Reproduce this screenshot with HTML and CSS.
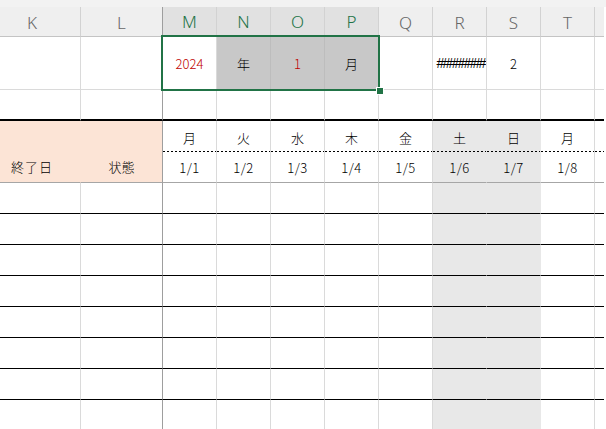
FILE: index.html
```html
<!DOCTYPE html>
<html lang="ja">
<head>
<meta charset="utf-8">
<link rel="stylesheet" href="styles.css">
</head>
<body>
<div class="sheet">
  <div class="strip"></div>
  <div class="grid">
    <!-- column headers -->
    <div class="c h k">K</div><div class="c h l">L</div>
    <div class="c h sel">M</div><div class="c h sel">N</div><div class="c h sel">O</div><div class="c h sel">P</div>
    <div class="c h">Q</div><div class="c h">R</div><div class="c h">S</div><div class="c h">T</div><div class="c h u"></div>
    <!-- row 1 -->
    <div class="c r1 k"></div><div class="c r1 l"></div>
    <div class="c r1 red">2024</div><div class="c r1 g">年</div><div class="c r1 g red">1</div><div class="c r1 g">月</div>
    <div class="c r1"></div><div class="c r1 hash">########</div><div class="c r1">2</div><div class="c r1"></div><div class="c r1 u"></div>
    <!-- row 2 -->
    <div class="c r2 k"></div><div class="c r2 l"></div>
    <div class="c r2"></div><div class="c r2"></div><div class="c r2"></div><div class="c r2"></div>
    <div class="c r2"></div><div class="c r2"></div><div class="c r2"></div><div class="c r2"></div><div class="c r2 u"></div>
    <!-- header rows -->
    <div class="c pk k k-title">終了日</div><div class="c pk l">状態</div>
    <div class="c dw">月</div><div class="c dw">火</div><div class="c dw">水</div><div class="c dw">木</div>
    <div class="c dw">金</div><div class="c dw we wr">土</div><div class="c dw we">日</div><div class="c dw">月</div><div class="c dw u"></div>
    <div class="c dt">1/1</div><div class="c dt">1/2</div><div class="c dt">1/3</div><div class="c dt">1/4</div>
    <div class="c dt">1/5</div><div class="c dt we wr">1/6</div><div class="c dt we">1/7</div><div class="c dt">1/8</div><div class="c dt u"></div>
    <!-- data rows -->
    <div class="c d k"></div><div class="c d l"></div><div class="c d"></div><div class="c d"></div><div class="c d"></div><div class="c d"></div><div class="c d"></div><div class="c d we wr"></div><div class="c d we"></div><div class="c d"></div><div class="c d u"></div>
    <div class="c d k"></div><div class="c d l"></div><div class="c d"></div><div class="c d"></div><div class="c d"></div><div class="c d"></div><div class="c d"></div><div class="c d we wr"></div><div class="c d we"></div><div class="c d"></div><div class="c d u"></div>
    <div class="c d k"></div><div class="c d l"></div><div class="c d"></div><div class="c d"></div><div class="c d"></div><div class="c d"></div><div class="c d"></div><div class="c d we wr"></div><div class="c d we"></div><div class="c d"></div><div class="c d u"></div>
    <div class="c d k"></div><div class="c d l"></div><div class="c d"></div><div class="c d"></div><div class="c d"></div><div class="c d"></div><div class="c d"></div><div class="c d we wr"></div><div class="c d we"></div><div class="c d"></div><div class="c d u"></div>
    <div class="c d k"></div><div class="c d l"></div><div class="c d"></div><div class="c d"></div><div class="c d"></div><div class="c d"></div><div class="c d"></div><div class="c d we wr"></div><div class="c d we"></div><div class="c d"></div><div class="c d u"></div>
    <div class="c d k"></div><div class="c d l"></div><div class="c d"></div><div class="c d"></div><div class="c d"></div><div class="c d"></div><div class="c d"></div><div class="c d we wr"></div><div class="c d we"></div><div class="c d"></div><div class="c d u"></div>
    <div class="c d k"></div><div class="c d l"></div><div class="c d"></div><div class="c d"></div><div class="c d"></div><div class="c d"></div><div class="c d"></div><div class="c d we wr"></div><div class="c d we"></div><div class="c d"></div><div class="c d u"></div>
    <div class="c d k"></div><div class="c d l"></div><div class="c d"></div><div class="c d"></div><div class="c d"></div><div class="c d"></div><div class="c d"></div><div class="c d we wr"></div><div class="c d we"></div><div class="c d"></div><div class="c d u"></div>
  </div>
  <div class="selection"><span class="handle"></span></div>
</div>
</body>
</html>
```
FILE: styles.css
```css
html, body {
  margin: 0;
  padding: 0;
  background: #ffffff;
  overflow: hidden;
}
.sheet {
  position: relative;
  width: 606px;
  height: 429px;
  overflow: hidden;
  font-family: "Noto Sans CJK JP", "Liberation Sans", sans-serif;
  font-weight: 300;
  font-size: 13px;
  color: #000;
}
.strip {
  height: 7px;
  background: #f2f2f2;
}
.grid {
  display: grid;
  grid-template-columns: 81px 82px repeat(8, 54px) 9px;
  grid-template-rows: 30px 53px 31px 31px 31px repeat(8, 31px);
}
.c {
  box-sizing: border-box;
  border-right: 1px solid #dadada;
  border-bottom: 1px solid #dadada;
  display: flex;
  align-items: center;
  justify-content: center;
  line-height: 1;
  white-space: nowrap;
  overflow: hidden;
}
.k { padding-right: 16px; }
.l { border-right-color: #9e9e9e; }
.u { border-right: none; }

/* column headers */
.h {
  background: #efefef;
  border-right-color: #d2d2d2;
  border-bottom-color: #c4c4c4;
  font-family: "Noto Sans", "Liberation Sans", sans-serif;
  font-weight: 300;
  font-size: 17px;
  color: #666;
  padding-top: 1px;
}
.h.l { border-right-color: #9e9e9e; }
.h.sel {
  background: #e1e1e1;
  color: #217346;
  border-bottom: 2px solid #217346;
}
.h.u { border-right: none; }

/* row 1 */
.red { color: #c00000; }
.g { background: #c8c8c8; border-right-color: #bdbdbd; }
.hash {
  font-family: "Liberation Sans", sans-serif;
  font-weight: 400;
  font-size: 14px;
  letter-spacing: -1.8px;
  padding-left: 2px;
}

/* row 2 */
.r2 { border-bottom: 2px solid #000; }

/* header rows */
.pk {
  grid-row: span 2;
  background: #fce4d6;
  border-right-color: #fce4d6;
  border-bottom-color: #a6a6a6;
  align-items: flex-end;
  padding-bottom: 9px;
}
.pk.l { border-right-color: #9e9e9e; }
.k-title { letter-spacing: 1px; }
.dw {
  border-bottom: none;
  background-image: repeating-linear-gradient(90deg, #000 0 2px, transparent 2px 4px);
  background-size: 100% 1px;
  background-position: left bottom;
  background-repeat: no-repeat;
  padding-top: 2px;
}
.dt {
  border-bottom-color: #a6a6a6;
  padding-top: 1px;
  letter-spacing: 0.5px;
}

/* data rows */
.d { border-bottom-color: #000; }

/* weekend shading */
.we { background-color: #e8e8e8; border-right-color: #e8e8e8; }
.wr { border-right-color: #e8e8e8; }

/* selection overlay */
.selection {
  position: absolute;
  left: 161px;
  top: 35px;
  width: 219px;
  height: 56px;
  box-sizing: border-box;
  border: 2px solid #217346;
}
.handle {
  position: absolute;
  right: -6px;
  bottom: -6px;
  width: 6px;
  height: 6px;
  background: #217346;
  border: 1px solid #ffffff;
}
```
